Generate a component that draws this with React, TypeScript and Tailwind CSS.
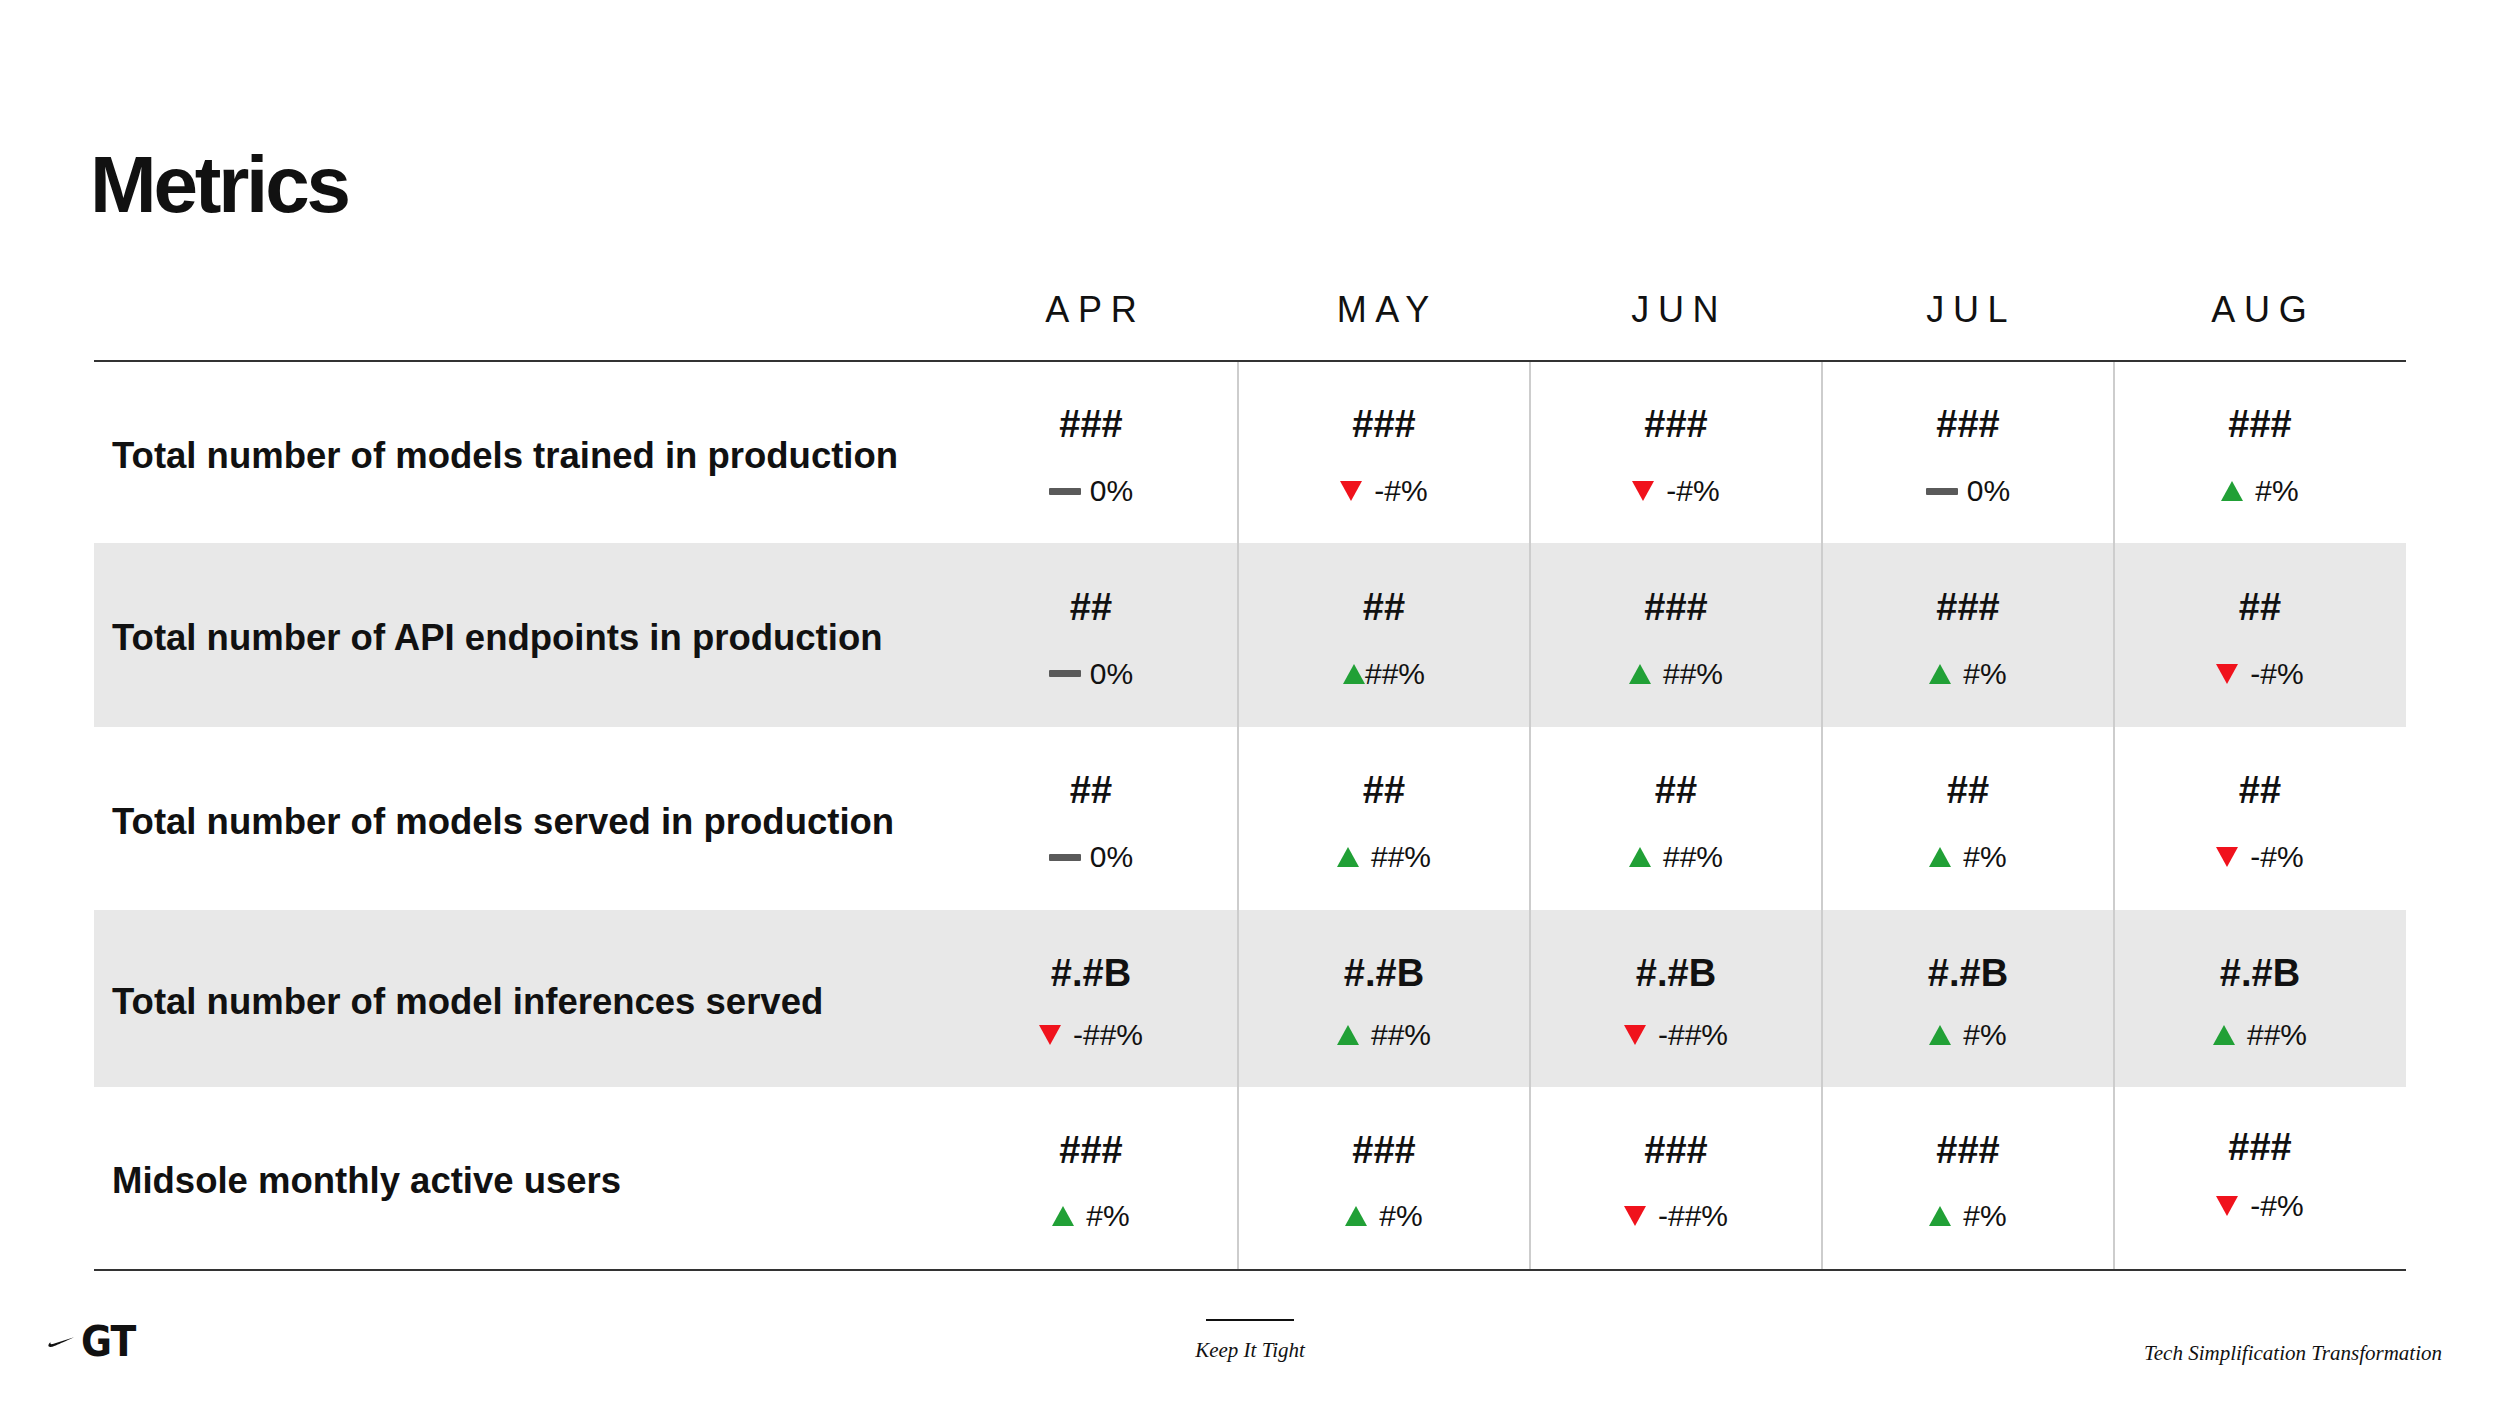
type Trend = "up" | "down" | "flat";

type Cell = { value: string; pct: string; trend: Trend; tight?: boolean; cellClass?: string; pctClass?: string };

type Row = { label: string; shaded: boolean; height: string; gap: string; cells: Cell[] };

const months = ["APR", "MAY", "JUN", "JUL", "AUG"];

const rows: Row[] = [
  {
    label: "Total number of models trained in production",
    shaded: false,
    height: "h-[181px]",
    gap: "gap-[33px]",
    cells: [
      { value: "###", pct: "0%", trend: "flat" },
      { value: "###", pct: "-#%", trend: "down" },
      { value: "###", pct: "-#%", trend: "down" },
      { value: "###", pct: "0%", trend: "flat" },
      { value: "###", pct: "#%", trend: "up" },
    ],
  },
  {
    label: "Total number of API endpoints in production",
    shaded: true,
    height: "h-[184px]",
    gap: "gap-[33px]",
    cells: [
      { value: "##", pct: "0%", trend: "flat" },
      { value: "##", pct: "##%", trend: "up", tight: true },
      { value: "###", pct: "##%", trend: "up" },
      { value: "###", pct: "#%", trend: "up" },
      { value: "##", pct: "-#%", trend: "down" },
    ],
  },
  {
    label: "Total number of models served in production",
    shaded: false,
    height: "h-[183px]",
    gap: "gap-[33px]",
    cells: [
      { value: "##", pct: "0%", trend: "flat" },
      { value: "##", pct: "##%", trend: "up" },
      { value: "##", pct: "##%", trend: "up" },
      { value: "##", pct: "#%", trend: "up" },
      { value: "##", pct: "-#%", trend: "down" },
    ],
  },
  {
    label: "Total number of model inferences served",
    shaded: true,
    height: "h-[177px]",
    gap: "gap-[28px]",
    cells: [
      { value: "#.#B", pct: "-##%", trend: "down" },
      { value: "#.#B", pct: "##%", trend: "up" },
      { value: "#.#B", pct: "-##%", trend: "down" },
      { value: "#.#B", pct: "#%", trend: "up" },
      { value: "#.#B", pct: "##%", trend: "up" },
    ],
  },
  {
    label: "Midsole monthly active users",
    shaded: false,
    height: "h-[182px]",
    gap: "gap-[32px]",
    cells: [
      { value: "###", pct: "#%", trend: "up" },
      { value: "###", pct: "#%", trend: "up" },
      { value: "###", pct: "-##%", trend: "down" },
      { value: "###", pct: "#%", trend: "up" },
      // this one sits a bit higher on the slide
      { value: "###", pct: "-#%", trend: "down", cellClass: "pb-[13px]", pctClass: "-mt-[7px]" },
    ],
  },
];

function TrendMark({ trend }: { trend: Trend }) {
  if (trend === "flat") {
    return <span className="block w-[32px] h-[7px] rounded-[1px] bg-[#5a5a5a]" />;
  }
  if (trend === "up") {
    return (
      <svg width="22" height="20" viewBox="0 0 22 20" className="block">
        <path d="M11 0 L22 20 L0 20 Z" fill="#21a036" />
      </svg>
    );
  }
  return (
    <svg width="22" height="20" viewBox="0 0 22 20" className="block">
      <path d="M0 0 L22 0 L11 20 Z" fill="#f0121c" />
    </svg>
  );
}

function Swoosh() {
  return (
    <svg width="27" height="12" viewBox="0 0 26 11" className="block">
      <path
        d="M3.4 5.6 C0.8 8 0.6 10.4 3.2 10.4 C5.2 10.4 9 8.8 26 1 L5.6 7.4 C3.9 7.9 2.6 7.2 3.4 5.6 Z"
        fill="#111"
      />
    </svg>
  );
}

export default function App() {
  return (
    <div className="w-full h-[1406px] bg-white text-[#111] font-['Liberation_Sans',Arial,sans-serif] overflow-hidden">
      <div className="px-[94px] pt-[145px]">
        <h1 className="-ml-[4px] text-[80px] font-bold leading-none tracking-[-0.04em]">Metrics</h1>

        {/* month header */}
        <div className="flex h-[137px] items-end pb-[32px] border-b-2 border-[#333]">
          <div className="w-[851px]" />
          {months.map((m) => (
            <div key={m} className="w-[292px] text-center text-[36px] leading-none tracking-[0.24em] pl-[0.24em]">
              {m}
            </div>
          ))}
        </div>

        {rows.map((row) => (
          <div key={row.label} className={`flex ${row.height} ${row.shaded ? "bg-[#e8e8e8]" : "bg-white"}`}>
            <div className="w-[851px] flex items-center pl-[18px] pt-[7px] text-[36.5px] font-bold leading-none">
              {row.label}
            </div>
            {row.cells.map((cell, idx) => (
              <div
                key={`${row.label}-${idx}`}
                className={`w-[292px] flex flex-col items-center justify-center pt-[6px] ${row.gap} ${
                  idx > 0 ? "border-l-2 border-[#cdcdcd]" : ""
                } ${cell.cellClass ?? ""}`}
              >
                <div className="text-[38px] font-bold leading-none">{cell.value}</div>
                <div
                  className={`flex items-center text-[30px] leading-none ${
                    cell.trend === "flat" ? "gap-[9px]" : cell.tight ? "gap-0" : "gap-[12px]"
                  } ${cell.pctClass ?? ""}`}
                >
                  <TrendMark trend={cell.trend} />
                  <span>{cell.pct}</span>
                </div>
              </div>
            ))}
          </div>
        ))}
        <div className="border-t-2 border-[#333]" />
      </div>

      {/* footer */}
      <div className="flex items-start justify-between">
        <div className="mt-[50px] w-[600px] pl-[47px] flex items-center gap-[7px]">
          <Swoosh />
          <span className="text-[42px] font-bold leading-none tracking-[-0.02em] font-['Liberation_Sans_Narrow','DejaVu_Sans_Condensed',sans-serif]">
            GT
          </span>
        </div>
        <div className="mt-[48px] flex flex-col items-center">
          <div className="w-[88px] h-[2px] bg-[#111]" />
          <div className="mt-[19px] text-[21px] italic leading-none font-['Liberation_Serif',serif]">Keep It Tight</div>
        </div>
        <div className="mt-[72px] w-[600px] pr-[58px] text-right text-[21px] italic leading-none font-['Liberation_Serif',serif]">
          Tech Simplification Transformation
        </div>
      </div>
    </div>
  );
}
